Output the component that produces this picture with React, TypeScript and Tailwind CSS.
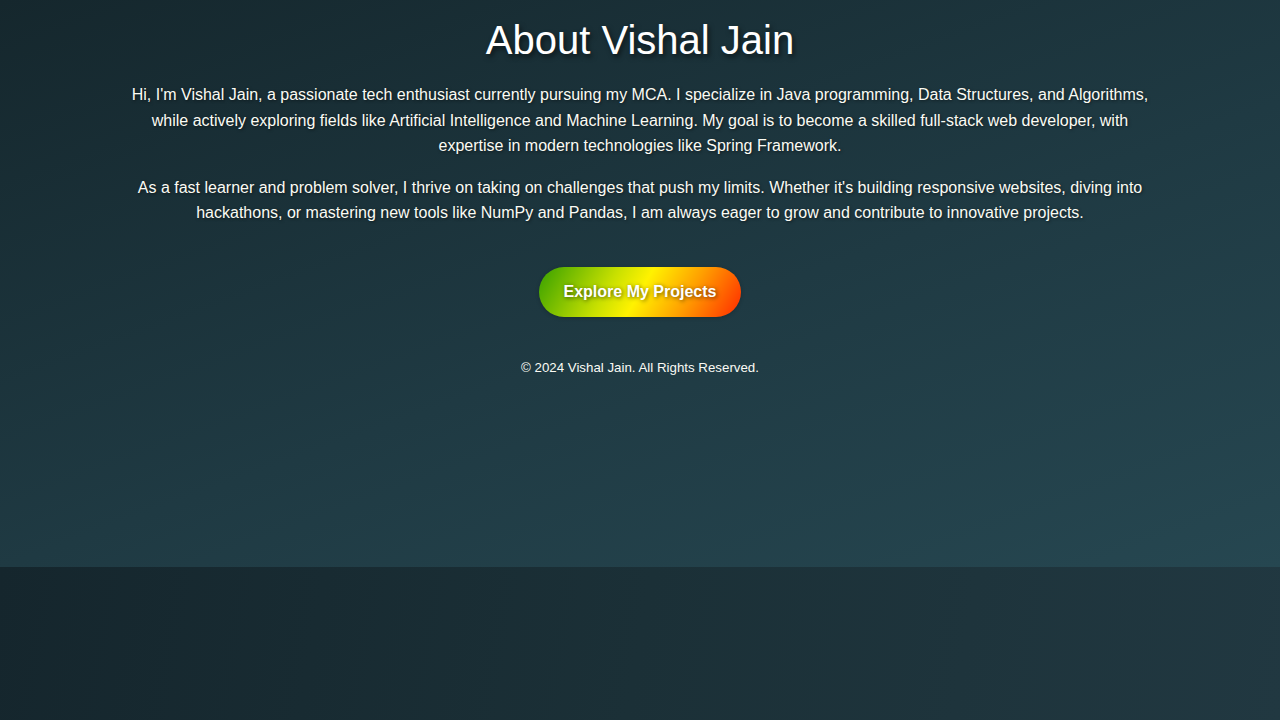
export default function App() {
  return (
    <div className="w-full" style={{ fontFamily: '"Liberation Sans", Arial, sans-serif' }}>
      <section className="h-[567px] bg-[linear-gradient(160deg,#15272d_0%,#1f3a43_55%,#264751_100%)] flex flex-col items-center">
        <h1 className="mt-[14px] text-[40px] leading-[52px] text-white [text-shadow:2px_3px_5px_rgba(0,0,0,0.55)]">
          About Vishal Jain
        </h1>

        <div className="w-[1040px] mt-[16px] text-center text-[16px] leading-[25.6px] text-[#fbfbf4] [text-shadow:1px_1px_3px_rgba(0,0,0,0.5)]">
          <p>
            Hi, I'm Vishal Jain, a passionate tech enthusiast currently pursuing my MCA. I specialize in Java programming, Data Structures, and Algorithms, while actively exploring fields like Artificial Intelligence and Machine Learning. My goal is to become a skilled full-stack web developer, with expertise in modern technologies like Spring Framework.
          </p>
          <p className="mt-[16px]">
            As a fast learner and problem solver, I thrive on taking on challenges that push my limits. Whether it's building responsive websites, diving into hackathons, or mastering new tools like NumPy and Pandas, I am always eager to grow and contribute to innovative projects.
          </p>
        </div>

        <button className="mt-[41px] w-[202px] h-[50px] rounded-full bg-[linear-gradient(120deg,#36a000_0%,#c8e000_35%,#fff200_50%,#ffa000_72%,#ff2a00_100%)] text-white font-bold text-[16px] [text-shadow:1px_1px_4px_rgba(0,0,0,0.6)] shadow-[0_1px_4px_rgba(0,0,0,0.2)]">
          Explore My Projects
        </button>

        <footer className="mt-[42px] text-[13.3px] leading-[18px] text-[#fafaf4]">
          © 2024 Vishal Jain. All Rights Reserved.
        </footer>
      </section>
      <div className="h-[153px] bg-[linear-gradient(100deg,#15262d_0%,#1b3037_50%,#213841_100%)]" />
    </div>
  );
}
